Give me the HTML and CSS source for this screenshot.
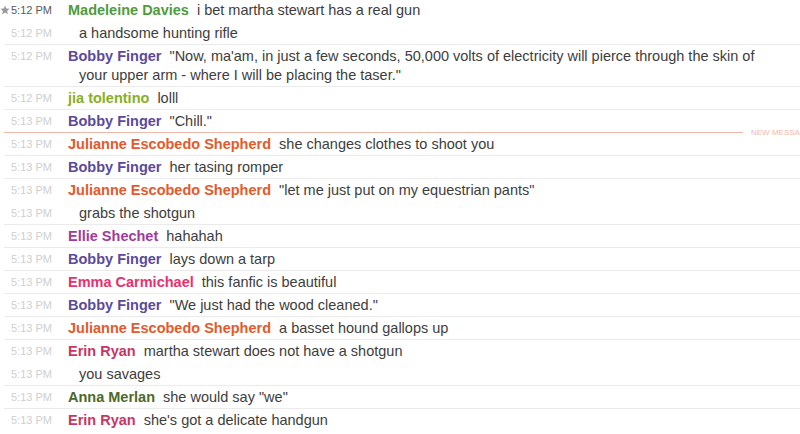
FILE: index.html
```html
<!DOCTYPE html>
<html lang="en">
<head>
    <meta charset="UTF-8">
    <meta name="viewport" content="width=device-width, initial-scale=1.0">
    <title>Chat Transcript</title>
    <link rel="stylesheet" href="styles.css">
</head>
<body>
    <div class="chat">
        <div class="msg starred">
            <div class="time">
                <svg class="star" viewBox="0 0 10 10"><polygon points="5,0.4 6.3,3.4 9.6,3.7 7.1,5.9 7.9,9.2 5,7.5 2.1,9.2 2.9,5.9 0.4,3.7 3.7,3.4"/></svg>
                5:12 PM
            </div>
            <div class="body"><span class="name c-madeleine">Madeleine Davies</span> i bet martha stewart has a real gun</div>
        </div>
        <div class="msg cont">
            <div class="time">5:12 PM</div>
            <div class="body">a handsome hunting rifle</div>
        </div>
        <div class="msg">
            <div class="time">5:12 PM</div>
            <div class="body"><span class="name c-bobby">Bobby Finger</span> "Now, ma'am, in just a few seconds, 50,000 volts of electricity will pierce through the skin of your upper arm - where I will be placing the taser."</div>
        </div>
        <div class="msg">
            <div class="time">5:12 PM</div>
            <div class="body"><span class="name c-jia">jia tolentino</span> lolll</div>
        </div>
        <div class="msg">
            <div class="time">5:13 PM</div>
            <div class="body"><span class="name c-bobby">Bobby Finger</span> "Chill."</div>
        </div>
        <div class="msg new">
            <div class="time">5:13 PM</div>
            <div class="body"><span class="name c-julianne">Julianne Escobedo Shepherd</span> she changes clothes to shoot you</div>
        </div>
        <div class="msg">
            <div class="time">5:13 PM</div>
            <div class="body"><span class="name c-bobby">Bobby Finger</span> her tasing romper</div>
        </div>
        <div class="msg">
            <div class="time">5:13 PM</div>
            <div class="body"><span class="name c-julianne">Julianne Escobedo Shepherd</span> "let me just put on my equestrian pants"</div>
        </div>
        <div class="msg cont">
            <div class="time">5:13 PM</div>
            <div class="body">grabs the shotgun</div>
        </div>
        <div class="msg">
            <div class="time">5:13 PM</div>
            <div class="body"><span class="name c-ellie">Ellie Shechet</span> hahahah</div>
        </div>
        <div class="msg">
            <div class="time">5:13 PM</div>
            <div class="body"><span class="name c-bobby">Bobby Finger</span> lays down a tarp</div>
        </div>
        <div class="msg">
            <div class="time">5:13 PM</div>
            <div class="body"><span class="name c-emma">Emma Carmichael</span> this fanfic is beautiful</div>
        </div>
        <div class="msg">
            <div class="time">5:13 PM</div>
            <div class="body"><span class="name c-bobby">Bobby Finger</span> "We just had the wood cleaned."</div>
        </div>
        <div class="msg">
            <div class="time">5:13 PM</div>
            <div class="body"><span class="name c-julianne">Julianne Escobedo Shepherd</span> a basset hound gallops up</div>
        </div>
        <div class="msg">
            <div class="time">5:13 PM</div>
            <div class="body"><span class="name c-erin">Erin Ryan</span> martha stewart does not have a shotgun</div>
        </div>
        <div class="msg cont">
            <div class="time">5:13 PM</div>
            <div class="body">you savages</div>
        </div>
        <div class="msg">
            <div class="time">5:13 PM</div>
            <div class="body"><span class="name c-anna">Anna Merlan</span> she would say "we"</div>
        </div>
        <div class="msg">
            <div class="time">5:13 PM</div>
            <div class="body"><span class="name c-erin">Erin Ryan</span> she's got a delicate handgun</div>
        </div>
    </div>
</body>
</html>
```

FILE: styles.css
```css
html {
    overflow: hidden;
}

body {
    margin: 0;
    background: #fff;
    font-family: 'Liberation Sans', Arial, sans-serif;
    color: #3d3d3d;
}

.chat {
    margin-top: -2px;
    margin-left: 4px;
}

.msg {
    display: flex;
    position: relative;
    border-top: 1px solid #ebebeb;
    padding: 2px 0 1px;
    line-height: 19px;
}

.msg.cont {
    border-top-color: transparent;
}

.msg.new {
    border-top-color: #efb8a8;
}

.msg.new::before {
    content: "NEW MESSAGES";
    position: absolute;
    top: -5px;
    left: 739px;
    padding: 0 8px;
    background: #fff;
    color: #f2b9aa;
    font-size: 8px;
    line-height: 9px;
    white-space: nowrap;
}

.time {
    position: relative;
    flex: 0 0 57px;
    padding-left: 7px;
    font-size: 11px;
    color: #cfcfcf;
    white-space: nowrap;
}

.starred .time {
    color: #595959;
}

.star {
    position: absolute;
    left: -4px;
    top: 4px;
    width: 10px;
    height: 10px;
    fill: #9a9a9a;
}

.body {
    flex: 1;
    padding: 0 18px 0 11px;
    font-size: 14.5px;
}

.msg:not(.cont) .body {
    text-indent: -11px;
}

.name {
    font-weight: bold;
    margin-right: 4px;
}

.c-madeleine { color: #4f9b3d; }
.c-bobby { color: #5a4a9c; }
.c-jia { color: #86b025; }
.c-julianne { color: #e5592a; }
.c-ellie { color: #a03b9c; }
.c-emma { color: #e9306d; }
.c-erin { color: #c73664; }
.c-anna { color: #4b6a28; }
```
